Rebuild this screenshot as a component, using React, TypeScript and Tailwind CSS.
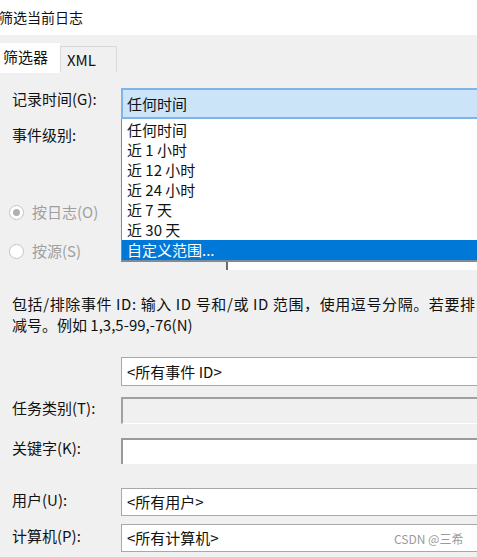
import React from "react";

const timeOptions = [
  "任何时间",
  "近 1 小时",
  "近 12 小时",
  "近 24 小时",
  "近 7 天",
  "近 30 天",
  "自定义范围...",
];

function Label({ text, className = "" }: { text: string; className?: string }) {
  return (
    <div className={`w-[121px] shrink-0 pl-[12px] leading-[20px] ${className}`}>
      {text}
    </div>
  );
}

function Radio({ checked }: { checked?: boolean }) {
  return (
    <span className="w-[15px] h-[15px] rounded-full border border-[#c4c4c4] bg-white flex items-center justify-center">
      {checked && <span className="w-[7px] h-[7px] rounded-full bg-[#b0b0b0]" />}
    </span>
  );
}

export default function App() {
  return (
    <div
      className="w-[477px] h-[557px] overflow-hidden bg-[#f0f0f0] text-[15px] text-[#111]"
      style={{ fontFamily: '"Noto Sans CJK SC", "Noto Sans", sans-serif' }}
    >
      {/* title */}
      <div className="h-[35px] bg-white flex items-center text-[14px] -ml-[1px]">
        筛选当前日志
      </div>

      {/* tabs */}
      <div className="h-[38px] flex items-end">
        <div className="w-[60px] h-[30px] bg-white pl-[3px] leading-[28px]">筛选器</div>
        <div className="w-[57px] h-[26px] mb-[1px] border border-b-0 border-[#d9d9d9] pl-[6px] leading-[26px]">
          XML
        </div>
      </div>

      <div className="relative w-[520px] pt-[15px]">
        {/* 记录时间 */}
        <div className="flex h-[31px]">
          <Label text="记录时间(G):" className="mt-[1px]" />
          <div className="w-[380px] h-[31px] bg-[#cce4f7] border-y-2 border-l-2 border-[#7eb4ea] pl-[4px] leading-[27px]">
            任何时间
          </div>
        </div>

        {/* dropdown list */}
        <div className="absolute z-10 left-[121px] top-[46px] w-[380px] bg-white border-l border-b-2 border-[#7d8a99] pt-[1px]">
          {timeOptions.map((o, i) => (
            <div
              key={o}
              className={`h-[20px] leading-[20px] pl-[5px] ${
                i === timeOptions.length - 1 ? "bg-[#0078d7] text-white" : ""
              }`}
            >
              {o}
            </div>
          ))}
        </div>

        {/* 事件级别 */}
        <div className="flex mt-[6px]">
          <Label text="事件级别:" />
        </div>

        {/* 按日志 */}
        <div className="flex items-center h-[20px] mt-[57px] pl-[9px] text-[#a0a0a0]">
          <Radio checked />
          <span className="ml-[8px]">按日志(O)</span>
        </div>

        {/* 按源 */}
        <div className="flex h-[30px] mt-[18px]">
          <div className="flex items-center h-[20px] mt-[1px] pl-[9px] text-[#a0a0a0] w-[226px]">
            <Radio />
            <span className="ml-[8px]">按源(S)</span>
          </div>
          <div className="w-[280px] h-[30px] bg-white border-l-2 border-[#6a6a6a]" />
        </div>

        {/* description */}
        <div className="mt-[24px] pl-[12px] leading-[20.5px] w-[477px] overflow-hidden">
          <div className="whitespace-nowrap tracking-[0.6px]">
            包括/排除事件 ID: 输入 ID 号和/或 ID 范围，使用逗号分隔。若要排
          </div>
          <div className="whitespace-nowrap">减号。例如 1,3,5-99,-76(N)</div>
        </div>

        {/* 事件 ID */}
        <div className="flex mt-[22px]">
          <div className="w-[121px] shrink-0" />
          <div className="w-[380px] h-[29px] bg-white border border-[#a8a8a8] pl-[5px] leading-[27px]">
            &lt;所有事件 ID&gt;
          </div>
        </div>

        {/* 任务类别 */}
        <div className="flex mt-[11px]">
          <Label text="任务类别(T):" className="mt-[1px]" />
          <div className="w-[380px] h-[27px] bg-[#f0f0f0] border-t-2 border-l-2 border-b border-t-[#a0a0a0] border-l-[#a0a0a0] border-b-white" />
        </div>

        {/* 关键字 */}
        <div className="flex mt-[14px]">
          <Label text="关键字(K):" />
          <div className="w-[380px] h-[26px] bg-white border-t-2 border-l-2 border-[#9a9a9a]" />
        </div>

        {/* 用户 */}
        <div className="flex mt-[24px]">
          <Label text="用户(U):" className="mt-[2px]" />
          <div className="w-[380px] h-[28px] bg-white border border-[#a8a8a8] pl-[5px] leading-[26px]">
            &lt;所有用户&gt;
          </div>
        </div>

        {/* 计算机 */}
        <div className="flex mt-[8px]">
          <Label text="计算机(P):" className="mt-[2px]" />
          <div className="relative w-[380px] h-[28px] bg-white border border-[#a8a8a8] pl-[5px] leading-[26px]">
            &lt;所有计算机&gt;
            <span className="absolute left-[272px] top-[1px] text-[12px] text-[#9a9a9a]">
              CSDN @三希
            </span>
          </div>
        </div>
      </div>
    </div>
  );
}
